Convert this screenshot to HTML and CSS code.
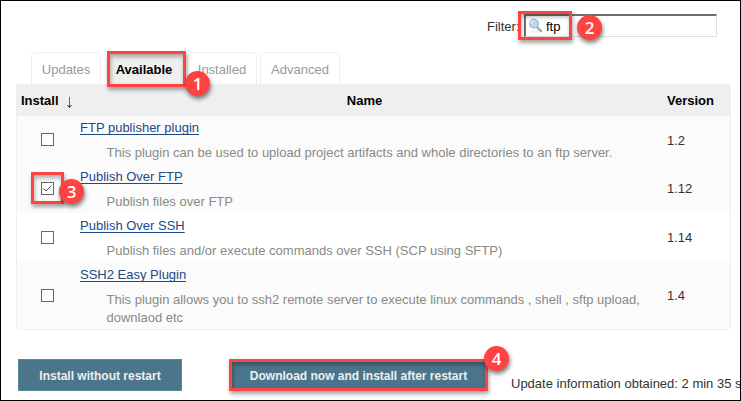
FILE: index.html
```html
<!DOCTYPE html>
<html lang="en">
<head>
<meta charset="utf-8">
<title>Plugin Manager</title>
<link rel="stylesheet" href="styles.css">
</head>
<body>
<main class="page">
  <div class="filter">
    <label class="filter-label" for="filter">Filter:</label>
    <div class="search" id="filter">
      <svg class="search-icon" width="16" height="16" viewBox="0 0 16 16">
        <ellipse cx="8" cy="13.5" rx="6" ry="1.3" fill="#eee"/>
        <path d="M9 9l4 3.8" stroke="#999" stroke-width="2.4" stroke-linecap="round"/>
        <path d="M9.5 9l3.5 3" stroke="#ccc" stroke-width="1"/>
        <circle cx="6" cy="5.7" r="4.3" fill="#bed8f2" stroke="#9db3cf" stroke-width="1.2"/>
        <path d="M3 5.5a3 3 0 0 1 4-2.7" fill="none" stroke="#eef6ff" stroke-width="1.4"/>
      </svg>
      <span class="query">ftp</span>
      <span class="mark mark-search"></span>
      <span class="badge badge-2">2</span>
    </div>
  </div>

  <nav class="tabs">
    <a class="tab tab-updates">Updates</a>
    <a class="tab tab-available">Available<span class="mark mark-tab"></span><span class="badge badge-1">1</span></a>
    <a class="tab tab-installed">Installed</a>
    <a class="tab tab-advanced">Advanced</a>
  </nav>

  <section class="plugins">
    <div class="row head">
      <div class="install">Install<svg class="arrow" width="7" height="13" viewBox="0 0 7 13"><path d="M3.5 1v10" stroke="#666" stroke-width="1"/><path d="M1.5 9l2 2.5 2-2.5" fill="none" stroke="#222" stroke-width="1"/></svg></div>
      <div class="name">Name</div>
      <div class="version">Version</div>
    </div>
    <div class="row shade r1">
      <div class="install"><span class="check"></span></div>
      <div class="name"><a class="link">FTP publisher plugin</a><p class="desc">This plugin can be used to upload project artifacts and whole directories to an ftp server.</p></div>
      <div class="version">1.2</div>
    </div>
    <div class="row shade r2">
      <div class="install"><span class="check"><svg width="11" height="11" viewBox="0 0 11 11"><path d="M1.5 5.5l2.5 2.5 5.5-5.5" fill="none" stroke="#555" stroke-width="1"/></svg><span class="mark mark-check"></span><span class="badge badge-3">3</span></span></div>
      <div class="name"><a class="link">Publish Over FTP</a><p class="desc">Publish files over FTP</p></div>
      <div class="version">1.12</div>
    </div>
    <div class="row r3">
      <div class="install"><span class="check"></span></div>
      <div class="name"><a class="link">Publish Over SSH</a><p class="desc">Publish files and/or execute commands over SSH (SCP using SFTP)</p></div>
      <div class="version">1.14</div>
    </div>
    <div class="row shade r4">
      <div class="install"><span class="check"></span></div>
      <div class="name"><a class="link">SSH2 Easy Plugin</a><p class="desc">This plugin allows you to ssh2 remote server to execute linux commands , shell , sftp upload,<br>downlaod etc</p></div>
      <div class="version">1.4</div>
    </div>
  </section>

  <footer class="actions">
    <button class="button install-now">Install without restart</button>
    <button class="button download">Download now and install after restart<span class="mark mark-button"></span><span class="badge badge-4">4</span></button>
    <span class="status">Update information obtained: 2 min 35 s</span>
  </footer>
</main>
</body>
</html>
```

FILE: styles.css
```css
* { box-sizing: border-box; }
body {
  margin: 0;
  font-family: "Liberation Sans", Arial, sans-serif;
  font-size: 13px;
  color: #333;
}
.page {
  width: 741px;
  height: 401px;
  border: 1px solid #000;
  background: #fff;
  overflow: hidden;
}
.filter { display: flex; justify-content: flex-end; padding: 13px 23px 0 0; height: 51px; }
.filter-label { line-height: 25px; width: 37px; white-space: nowrap; }
.search {
  position: relative;
  display: flex;
  width: 193px;
  height: 23px;
  border: 1px solid #e0e0e0;
  border-top: 2px solid #707070;
  border-left: 2px solid #707070;
  padding-left: 2px;
}
.search-icon { margin-top: 2px; }
.query { margin-left: 2px; line-height: 21px; color: #000; }
.tabs { display: flex; height: 32px; padding-left: 30px; }
.tab {
  position: relative;
  height: 32px;
  border: 1px solid #eee;
  border-bottom: 0;
  border-radius: 5px 5px 0 0;
  color: #999;
  line-height: 34px;
  text-align: center;
  white-space: nowrap;
}
.tab-updates { width: 70px; margin-right: 6px; }
.tab-available { width: 79px; margin-right: 1px; padding-right: 5px; background: #efefef; color: #000; font-weight: bold; z-index: 1; }
.tab-installed { width: 70px; margin-right: 3px; }
.tab-advanced { width: 80px; }
.plugins {
  width: 715px;
  height: 246px;
  margin-left: 15px;
  border: 1px solid #efefef;
  border-top: 0;
  border-radius: 4px;
}
.row { display: grid; grid-template-columns: 60px 1fr 65px; height: 49px; }
.head {
  height: 32px;
  margin: 0 -1px;
  padding: 0 1px;
  background: #efefef;
  border-radius: 4px 4px 0 0;
  color: #000;
  font-weight: bold;
  line-height: 33px;
}
.head .install { padding-left: 4px; }
.head .name { padding: 0 13px 0 0; text-align: center; }
.head .version { padding: 0 0 0 2px; }
.arrow { margin-left: 7px; vertical-align: -4px; }
.shade { background: #fbfbfb; }
.row:not(.head) .install { display: flex; align-items: flex-start; padding: 18px 0 0 24px; }
.row:not(.head) .name { padding: 4px 0 0 3px; }
.row.r1 { height: 48px; }
.row.r1 .install { padding-top: 17px; }
.row.r1 .name { padding-top: 3px; }
.row.r4 { height: 67px; }
.row.r4 .install { padding-top: 27px; }
.check {
  position: relative;
  width: 13px;
  height: 13px;
  border: 1px solid #666;
  background: #fff;
}
.check svg { display: block; }
.link {
  display: block;
  width: max-content;
  height: 16px;
  line-height: 17px;
  color: #204a87;
  text-decoration: underline;
  text-decoration-thickness: 1px;
  text-decoration-skip-ink: none;
  text-underline-offset: 2px;
}
.desc { margin: 9px 0 0 26.5px; line-height: 18px; color: #888a85; white-space: nowrap; }
.row:not(.head) .version { display: flex; align-items: center; padding-left: 2px; }
.actions { display: flex; padding: 29px 0 0 17px; white-space: nowrap; }
.button {
  position: relative;
  flex-shrink: 0;
  height: 32px;
  padding: 2px 0 0;
  border: 1px solid #5688a0;
  background: #4b758b;
  color: #eee;
  font: bold 12px "Liberation Sans", Arial, sans-serif;
}
.install-now { width: 164px; }
.download { width: 259px; margin-left: 47px; }
.status { margin: 17px 0 0 23px; line-height: 16px; }
.mark {
  position: absolute;
  border: 3px solid #ff4242;
  box-shadow: 1px 3px 4px rgba(0, 0, 0, .35), inset 1px 3px 4px rgba(0, 0, 0, .3);
}
.mark-search { left: -8px; top: -5px; width: 54px; height: 29px; }
.mark-tab { left: -1px; top: -2px; width: 79px; height: 36px; }
.mark-check { left: -11px; top: -11px; width: 33px; height: 32px; }
.mark-button { left: -1px; top: -1px; width: 259px; height: 32px; }
.badge {
  position: absolute;
  z-index: 2;
  width: 25px;
  height: 25px;
  border-radius: 50%;
  background: #ff4242;
  box-shadow: 1px 3px 4px rgba(0, 0, 0, .5);
  color: #fff;
  font: 600 17px/25px "Open Sans", sans-serif;
  text-align: center;
}
.badge-1 { left: 77px; top: 18px; }
.badge-2 { left: 51px; top: -1px; }
.badge-3 { left: 17px; top: -4px; }
.badge-4 { left: 254px; top: -14px; }
```
